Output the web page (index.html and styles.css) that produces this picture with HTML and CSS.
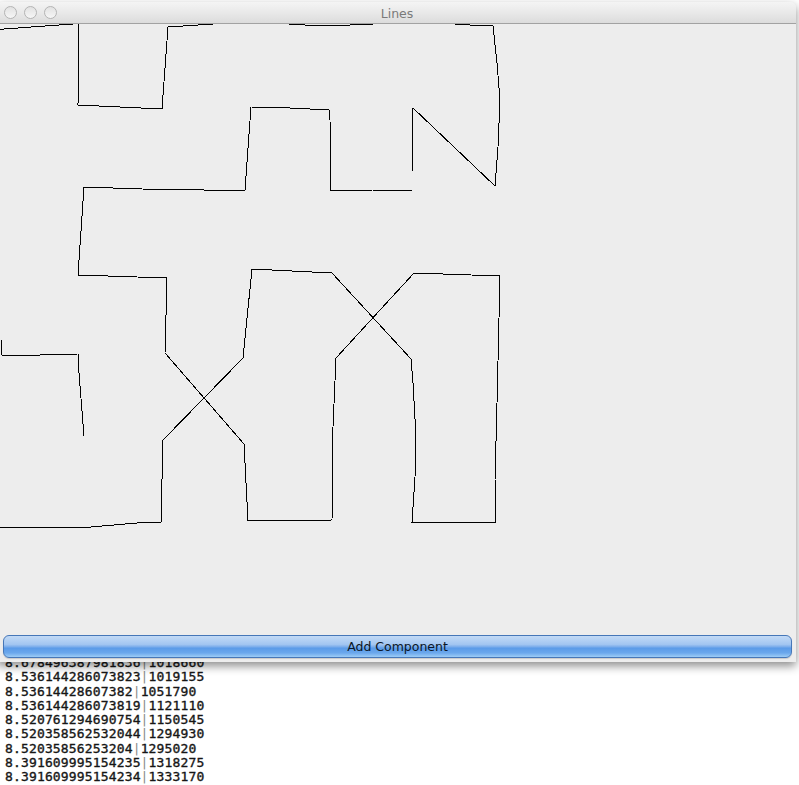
FILE: index.html
```html
<!DOCTYPE html>
<html>
<head>
<meta charset="utf-8">
<title>Lines</title>
<link rel="stylesheet" href="styles.css">
</head>
<body>
<div class="desktop">
  <pre class="terminal">8.678496387981836<span class="sep">|</span>1018660
8.536144286073823<span class="sep">|</span>1019155
8.53614428607382<span class="sep">|</span>1051790
8.536144286073819<span class="sep">|</span>1121110
8.520761294690754<span class="sep">|</span>1150545
8.520358562532044<span class="sep">|</span>1294930
8.52035856253204<span class="sep">|</span>1295020
8.391609995154235<span class="sep">|</span>1318275
8.391609995154234<span class="sep">|</span>1333170</pre>

  <div class="window">
    <div class="titlebar">
      <div class="lights">
        <span class="light"></span>
        <span class="light"></span>
        <span class="light"></span>
      </div>
      <div class="title">Lines</div>
    </div>
    <div class="canvas">
      <svg class="drawing" width="799" height="608" viewBox="-3 24 799 608" xmlns="http://www.w3.org/2000/svg">
        <path class="stroke" d="M -10 30 L 73 24 L 76 18
          M 79 18 L 79 24 L 78 105 L 162 109 L 168 27 L 213 24 L 216 18
          M 285 18 L 289 24 L 305 25 L 325 26 L 350 25 L 373 24 L 378 18
          M 452 18 L 455 24 L 470 25 L 493 26 L 497 63 L 500 100 L 498 147 L 495 186 L 413 108 L 412 172 L 412 191 L 372 190 L 331 190 L 330 120 L 329 110 L 290 108 L 251 107 L 245 190 L 204 190 L 142 189 L 84 187 L 78 275 L 167 278 L 165 353 L 244 444 L 248 521 L 332 520 L 333 427 L 336 358 L 414 273 L 500 276 L 497 403 L 495 480 L 495 522 L 412 522 L 415 477 L 416 437 L 413 383 L 411 359 L 332 273 L 252 269 L 243 358 L 163 440 L 162 480 L 161 522 L 137 523 L 91 527 L -10 527
          M 1 340 L 2 355 L 40 355 L 78 354 L 79 373 L 84 436" />
      </svg>
    </div>
    <div class="buttonbar">
      <button class="aqua">Add Component</button>
    </div>
  </div>
</div>
</body>
</html>
```

FILE: styles.css
```css
html, body {
  margin: 0;
  padding: 0;
  background: #ffffff;
}

.desktop {
  position: relative;
  width: 799px;
  height: 785px;
  overflow: hidden;
  background: #ffffff;
}

.terminal {
  margin: 0;
  padding: 656px 0 0 5px;
  font-family: "DejaVu Sans Mono", "Liberation Mono", monospace;
  font-size: 13px;
  line-height: 14.3px;
  letter-spacing: 0.15px;
  color: #161616;
  -webkit-text-stroke: 0.35px #161616;
}

.terminal .sep {
  color: #8a8a8a;
  -webkit-text-stroke: 0;
}

.window {
  position: absolute;
  top: 2px;
  left: -3px;
  width: 799px;
  height: 660px;
  display: flex;
  flex-direction: column;
  background: #ededed;
  border-radius: 5px 5px 0 0;
  box-shadow: 0 4px 10px rgba(0, 0, 0, 0.45);
  overflow: hidden;
}

.titlebar {
  position: relative;
  height: 21px;
  flex: none;
  display: flex;
  align-items: center;
  justify-content: center;
  background: linear-gradient(to bottom, #f4f4f4 0%, #e9e9e9 50%, #dcdcdc 100%);
  border-bottom: 1px solid #a2a2a2;
}

.lights {
  position: absolute;
  left: 7px;
  top: 4px;
  display: flex;
  gap: 7px;
}

.light {
  width: 11px;
  height: 11px;
  border-radius: 50%;
  border: 1px solid #b4b4b4;
  background: linear-gradient(to bottom, #e2e2e2, #f6f6f6);
}

.title {
  font-family: "DejaVu Sans", "Liberation Sans", sans-serif;
  font-size: 12.5px;
  color: #7a7a7a;
  padding-left: 1px;
  padding-top: 1px;
}

.canvas {
  flex: none;
  height: 608px;
  background: #ededed;
}

.drawing {
  display: block;
}

.stroke {
  fill: none;
  stroke: #000000;
  stroke-width: 1;
  shape-rendering: crispEdges;
}

.buttonbar {
  flex: 1;
  padding: 3px 4px 0 6px;
}

.aqua {
  display: block;
  width: 100%;
  height: 23px;
  margin: 0;
  padding: 0;
  border: 1px solid #4677b8;
  border-radius: 6px;
  background: linear-gradient(to bottom, #c2daf6 0%, #a3c6f1 40%, #80b0ec 50%, #5b9be8 58%, #6aa7ec 80%, #9cccf6 100%);
  box-shadow: 0 1px 1px rgba(0, 0, 0, 0.15);
  font-family: "DejaVu Sans", "Liberation Sans", sans-serif;
  font-size: 12.5px;
  color: #0b1626;
  line-height: 21px;
  text-align: center;
}
```
